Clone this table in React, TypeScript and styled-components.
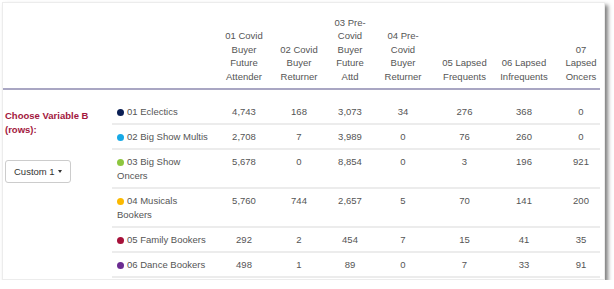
import React from "react";
import styled, { createGlobalStyle } from "styled-components";

const GlobalStyle = createGlobalStyle`
  html, body {
    margin: 0;
    padding: 0;
    background: #ffffff;
  }
  body {
    font-family: "Liberation Sans", Arial, sans-serif;
    font-size: 9.5px;
    color: #555555;
  }
`;

const COLS = [58, 52, 50, 56, 67, 52, 62];
const dataTemplate = COLS.map((w) => `${w}px`).join(" ");

const Panel = styled.div`
  margin: 2px 0 0 2px;
  width: 603px;
  box-sizing: border-box;
  border: 1px solid #ececec;
  padding: 0 4px 1px 0;
  background: #ffffff;
  box-shadow: 3px 3px 4px rgba(0, 0, 0, 0.5);
  overflow: hidden;
`;

const HeaderRow = styled.div`
  display: grid;
  grid-template-columns: 109px 103px ${dataTemplate};
  align-items: end;
  height: 85px;
  border-bottom: 2px solid #a9a6c3;
`;

const HeaderCell = styled.div`
  text-align: center;
  line-height: 13.5px;
  padding-bottom: 5px;
  color: #555555;
`;

const Body = styled.div`
  display: flex;
  padding-top: 10px;
`;

const LeftBlock = styled.div`
  width: 109px;
  flex: none;
  box-sizing: border-box;
  padding: 9px 0 0 2px;
  display: flex;
  flex-direction: column;
  align-items: flex-start;
`;

const ChooseLabel = styled.div`
  color: #a3173d;
  font-weight: bold;
  line-height: 14px;
  width: 104px;
`;

const DropButton = styled.button`
  margin-top: 23px;
  display: inline-flex;
  align-items: center;
  font-family: inherit;
  font-size: 9.5px;
  color: #333333;
  background: #ffffff;
  border: 1px solid #cccccc;
  border-radius: 3px;
  padding: 5px 8px;
  line-height: 11px;
  cursor: pointer;
`;

const Caret = styled.span`
  display: inline-block;
  margin-left: 3px;
  width: 0;
  height: 0;
  border-top: 3px solid #333333;
  border-left: 2.5px solid transparent;
  border-right: 2.5px solid transparent;
`;

const Table = styled.div`
  flex: 1;
  min-width: 0;
`;

const Row = styled.div`
  display: grid;
  grid-template-columns: 103px ${dataTemplate};
  border-bottom: 2px solid #ececec;
`;

const LabelCell = styled.div`
  padding: 5px 5px 4px 5px;
  line-height: 14px;
  color: #555555;
`;

const NumCell = styled.div`
  padding: 5px 0 4px 0;
  line-height: 14px;
  text-align: center;
  color: #555555;
`;

const Dot = styled.span<{ $color: string }>`
  display: inline-block;
  width: 7px;
  height: 7px;
  border-radius: 50%;
  background: ${(p) => p.$color};
  margin-right: 3px;
  vertical-align: -0.5px;
`;

const headers: string[][] = [
  ["01 Covid", "Buyer", "Future", "Attender"],
  ["02 Covid", "Buyer", "Returner"],
  ["03 Pre-", "Covid", "Buyer", "Future", "Attd"],
  ["04 Pre-", "Covid", "Buyer", "Returner"],
  ["05 Lapsed", "Frequents"],
  ["06 Lapsed", "Infrequents"],
  ["07", "Lapsed", "Oncers"],
];

type RowData = { color: string; label: string[]; values: string[] };

const rows: RowData[] = [
  { color: "#0b1f55", label: ["01 Eclectics"], values: ["4,743", "168", "3,073", "34", "276", "368", "0"] },
  { color: "#17a9e6", label: ["02 Big Show Multis"], values: ["2,708", "7", "3,989", "0", "76", "260", "0"] },
  { color: "#8dc63f", label: ["03 Big Show", "Oncers"], values: ["5,678", "0", "8,854", "0", "3", "196", "921"] },
  { color: "#fbb900", label: ["04 Musicals", "Bookers"], values: ["5,760", "744", "2,657", "5", "70", "141", "200"] },
  { color: "#a6113a", label: ["05 Family Bookers"], values: ["292", "2", "454", "7", "15", "41", "35"] },
  { color: "#6b2c91", label: ["06 Dance Bookers"], values: ["498", "1", "89", "0", "7", "33", "91"] },
];

const Lines = ({ lines }: { lines: string[] }) => (
  <>
    {lines.map((l, i) => (
      <React.Fragment key={i}>
        {i > 0 && <br />}
        {l}
      </React.Fragment>
    ))}
  </>
);

export default function App() {
  return (
    <>
      <GlobalStyle />
      <Panel>
        <HeaderRow>
          <div />
          <div />
          {headers.map((h, i) => (
            <HeaderCell key={i}>
              <Lines lines={h} />
            </HeaderCell>
          ))}
        </HeaderRow>
        <Body>
          <LeftBlock>
            <ChooseLabel>Choose Variable B (rows):</ChooseLabel>
            <DropButton type="button">
              Custom 1
              <Caret />
            </DropButton>
          </LeftBlock>
          <Table>
            {rows.map((r, i) => (
              <Row key={i}>
                <LabelCell>
                  <Dot $color={r.color} />
                  <Lines lines={r.label} />
                </LabelCell>
                {r.values.map((v, j) => (
                  <NumCell key={j}>{v}</NumCell>
                ))}
              </Row>
            ))}
          </Table>
        </Body>
      </Panel>
    </>
  );
}
